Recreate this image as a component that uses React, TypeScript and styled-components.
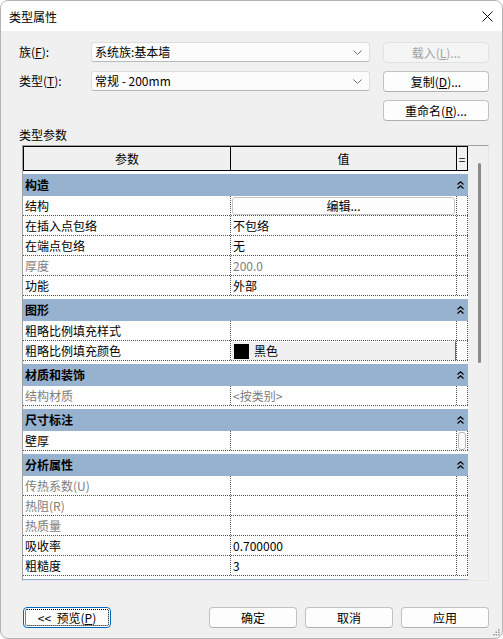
import React from 'react';
import styled, { createGlobalStyle } from 'styled-components';

const GlobalStyle = createGlobalStyle`
  html, body {
    margin: 0;
    padding: 0;
    background: #ffffff;
  }
  body {
    font-family: "Noto Sans CJK SC", "Noto Sans", sans-serif;
    font-size: 12px;
    color: #000;
  }
  * {
    box-sizing: border-box;
  }
`;

const Window = styled.div`
  position: relative;
  width: 503px;
  height: 639px;
  border: 1px solid #b4b4b4;
  border-radius: 8px;
  background: #f0f0f0;
  overflow: hidden;
  display: flex;
  flex-direction: column;
`;

const TitleBar = styled.div`
  height: 30px;
  flex: none;
  background: #ffffff;
  display: flex;
  align-items: center;
  justify-content: space-between;
  padding: 0 9px 0 8px;
`;

const Title = styled.div`
  font-size: 12px;
  line-height: 14px;
  margin-top: 1px;
`;

const Body = styled.div`
  flex: 1;
  padding: 11px 13px 0 18px;
  display: flex;
  flex-direction: column;
`;

const Form = styled.div`
  display: grid;
  grid-template-columns: 72px 279px 119px;
  grid-auto-rows: 21px;
  row-gap: 8px;
`;

const Label = styled.div`
  line-height: 20px;
  white-space: nowrap;
`;

const Combo = styled.div`
  height: 20px;
  background: #fcfcfc;
  border: 1px solid #dedede;
  border-bottom-color: #b8b8b8;
  border-radius: 3px;
  display: flex;
  align-items: center;
  justify-content: space-between;
  padding: 0 7px 0 3px;
  line-height: 18px;
  white-space: pre;
`;

const Button = styled.button<{ $disabled?: boolean; $width?: number }>`
  justify-self: end;
  width: ${(p) => p.$width ?? 106}px;
  height: 21px;
  margin: 0;
  padding: 0;
  font: inherit;
  font-size: 12px;
  line-height: 19px;
  color: ${(p) => (p.$disabled ? '#a3a3a3' : '#000')};
  background: ${(p) => (p.$disabled ? '#f5f5f5' : '#fdfdfd')};
  border: 1px solid ${(p) => (p.$disabled ? '#e2e2e2' : '#c2c2c2')};
  border-bottom-color: ${(p) => (p.$disabled ? '#e2e2e2' : '#b0b0b0')};
  border-radius: 4px;
  white-space: nowrap;
`;

const FocusButton = styled(Button)`
  border: 1px solid #0067c0;
  padding: 1px;
`;

const FocusRing = styled.span`
  display: block;
  height: 100%;
  border: 1px dotted #000;
  border-radius: 2px;
  line-height: 15px;
  white-space: pre;
`;

const SectionLabel = styled.div`
  margin-top: 7px;
  line-height: 14px;
  height: 14px;
`;

const TableFrame = styled.div`
  margin: 3px 0 0 3px;
  width: 467px;
  height: 436px;
  flex: none;
  border: 1px solid #e6e6e6;
  border-left-color: #a0a0a0;
  border-top-color: #a0a0a0;
  display: flex;
`;

const Grid = styled.div`
  width: 445px;
  height: 100%;
  background: #ffffff;
  overflow: hidden;
`;

const ScrollTrack = styled.div`
  flex: 1;
  background: #f0f0f0;
  padding: 17px 0 0 10px;
`;

const ScrollThumb = styled.div`
  width: 3px;
  height: 200px;
  border-radius: 2px;
  background: #8a8a8a;
`;

const HeaderRow = styled.div`
  display: grid;
  grid-template-columns: 208px 226px 11px;
  height: 25px;
  background: #f0f0f0;
  border-top: 1px solid #000;
  border-bottom: 1px solid #000;
`;

const HeaderCell = styled.div<{ $first?: boolean }>`
  border-right: 1px solid #000;
  border-left: ${(p) => (p.$first ? '1px solid #000' : 'none')};
  text-align: center;
  line-height: 23px;
  overflow: hidden;
`;

const GroupRow = styled.div`
  margin-top: 3px;
  height: 22px;
  background: #97b2cf;
  display: flex;
  align-items: center;
  justify-content: space-between;
  padding: 0 4px 0 2px;
  font-weight: 700;
  line-height: 22px;
`;

const DataRow = styled.div`
  display: grid;
  grid-template-columns: 208px 226px 11px;
  height: 20px;
  border-bottom: 1px dotted #555;
`;

const Cell = styled.div<{ $muted?: boolean }>`
  border-right: 1px dotted #555;
  padding-left: 2px;
  line-height: 19px;
  color: ${(p) => (p.$muted ? '#7d7d7d' : '#000')};
  white-space: nowrap;
  overflow: hidden;
`;

const FlatCell = styled.div`
  border-right: 1px dotted #555;
  padding: 0;
  overflow: hidden;
`;

const EditButton = styled.div`
  margin: 1px 1px 0 1px;
  height: 18px;
  border: 1px solid #c6c6c6;
  border-radius: 3px;
  background: #fdfdfd;
  text-align: center;
  line-height: 16px;
`;

const ColorButton = styled.div`
  height: 20px;
  background: #f0f0f0;
  border: 1px solid #6a6a6a;
  border-top-color: #ffffff;
  border-left-color: #ffffff;
  display: flex;
  align-items: center;
  gap: 5px;
  padding-left: 2px;
  line-height: 18px;
`;

const Swatch = styled.span`
  width: 15px;
  height: 15px;
  background: #000;
  flex: none;
`;

const Slot = styled.div`
  margin: 1px 0 0 1px;
  width: 8px;
  height: 18px;
  border: 1px solid #b8b8b8;
  border-radius: 3px;
  background: #fff;
`;

const Footer = styled.div`
  margin-top: 26px;
  display: flex;
  justify-content: space-between;
  padding-left: 4px;
`;

const FooterGroup = styled.div`
  display: flex;
  gap: 8px;
`;

const Grip = styled.svg`
  position: absolute;
  right: 2px;
  bottom: 2px;
`;

const Chevron = () => (
  <svg width="7" height="8" viewBox="0 0 7 8">
    <polyline points="0.5,3.5 3.5,0.8 6.5,3.5" fill="none" stroke="#000" strokeWidth="1.2" />
    <polyline points="0.5,7.5 3.5,4.8 6.5,7.5" fill="none" stroke="#000" strokeWidth="1.2" />
  </svg>
);

const ComboArrow = () => (
  <svg width="9" height="5" viewBox="0 0 9 5">
    <polyline points="0.5,0.5 4.5,4.5 8.5,0.5" fill="none" stroke="#6e6e6e" strokeWidth="1" />
  </svg>
);

const CloseIcon = () => (
  <svg width="11" height="11" viewBox="0 0 11 11">
    <line x1="0.5" y1="0.5" x2="10.5" y2="10.5" stroke="#111" strokeWidth="1" />
    <line x1="10.5" y1="0.5" x2="0.5" y2="10.5" stroke="#111" strokeWidth="1" />
  </svg>
);

type Item =
  | { kind: 'group'; label: string }
  | {
      kind: 'row';
      label: string;
      value?: string;
      muted?: boolean;
      valueKind?: 'text' | 'button' | 'color';
      slot?: boolean;
    };

// last group is scrolled almost out of view; only its top edge shows
const items: Item[] = [
  { kind: 'group', label: '构造' },
  { kind: 'row', label: '结构', value: '编辑...', valueKind: 'button' },
  { kind: 'row', label: '在插入点包络', value: '不包络' },
  { kind: 'row', label: '在端点包络', value: '无' },
  { kind: 'row', label: '厚度', value: '200.0', muted: true },
  { kind: 'row', label: '功能', value: '外部' },
  { kind: 'group', label: '图形' },
  { kind: 'row', label: '粗略比例填充样式', value: '' },
  { kind: 'row', label: '粗略比例填充颜色', value: '黑色', valueKind: 'color' },
  { kind: 'group', label: '材质和装饰' },
  { kind: 'row', label: '结构材质', value: '<按类别>', muted: true },
  { kind: 'group', label: '尺寸标注' },
  { kind: 'row', label: '壁厚', value: '', slot: true },
  { kind: 'group', label: '分析属性' },
  { kind: 'row', label: '传热系数(U)', value: '', muted: true },
  { kind: 'row', label: '热阻(R)', value: '', muted: true },
  { kind: 'row', label: '热质量', value: '', muted: true },
  { kind: 'row', label: '吸收率', value: '0.700000' },
  { kind: 'row', label: '粗糙度', value: '3' },
  { kind: 'group', label: '' },
];

const renderValue = (item: Extract<Item, { kind: 'row' }>) => {
  if (item.valueKind === 'button') {
    return (
      <FlatCell>
        <EditButton>{item.value}</EditButton>
      </FlatCell>
    );
  }
  if (item.valueKind === 'color') {
    return (
      <FlatCell>
        <ColorButton>
          <Swatch />
          {item.value}
        </ColorButton>
      </FlatCell>
    );
  }
  return <Cell $muted={item.muted}>{item.value}</Cell>;
};

export default function App() {
  return (
    <>
      <GlobalStyle />
      <Window>
        <TitleBar>
          <Title>类型属性</Title>
          <CloseIcon />
        </TitleBar>
        <Body>
          <Form>
            <Label>
              族(<u>F</u>):
            </Label>
            <Combo>
              系统族:基本墙
              <ComboArrow />
            </Combo>
            <Button $disabled>
              载入(<u>L</u>)...
            </Button>

            <Label>
              类型(<u>T</u>):
            </Label>
            <Combo>
              {'常规 - 200mm'}
              <ComboArrow />
            </Combo>
            <Button>
              复制(<u>D</u>)...
            </Button>

            <span />
            <span />
            <Button>
              重命名(<u>R</u>)...
            </Button>
          </Form>

          <SectionLabel>类型参数</SectionLabel>

          <TableFrame>
            <Grid>
              <HeaderRow>
                <HeaderCell $first>参数</HeaderCell>
                <HeaderCell>值</HeaderCell>
                <HeaderCell>=</HeaderCell>
              </HeaderRow>
              {items.map((item, i) =>
                item.kind === 'group' ? (
                  <GroupRow key={i}>
                    {item.label}
                    <Chevron />
                  </GroupRow>
                ) : (
                  <DataRow key={i}>
                    <Cell $muted={item.muted}>{item.label}</Cell>
                    {renderValue(item)}
                    <FlatCell>{item.slot && <Slot />}</FlatCell>
                  </DataRow>
                ),
              )}
            </Grid>
            <ScrollTrack>
              <ScrollThumb />
            </ScrollTrack>
          </TableFrame>

          <Footer>
            <FocusButton $width={88}>
              <FocusRing>
                {'<<  预览('}
                <u>P</u>)
              </FocusRing>
            </FocusButton>
            <FooterGroup>
              <Button $width={88}>确定</Button>
              <Button $width={88}>取消</Button>
              <Button $width={88}>应用</Button>
            </FooterGroup>
          </Footer>
        </Body>
        <Grip width="7" height="7" viewBox="0 0 7 7">
          <rect x="5" y="0" width="1.5" height="1.5" fill="#9a9a9a" />
          <rect x="2.5" y="2.5" width="1.5" height="1.5" fill="#9a9a9a" />
          <rect x="5" y="2.5" width="1.5" height="1.5" fill="#9a9a9a" />
          <rect x="0" y="5" width="1.5" height="1.5" fill="#9a9a9a" />
          <rect x="2.5" y="5" width="1.5" height="1.5" fill="#9a9a9a" />
          <rect x="5" y="5" width="1.5" height="1.5" fill="#9a9a9a" />
        </Grip>
      </Window>
    </>
  );
}
